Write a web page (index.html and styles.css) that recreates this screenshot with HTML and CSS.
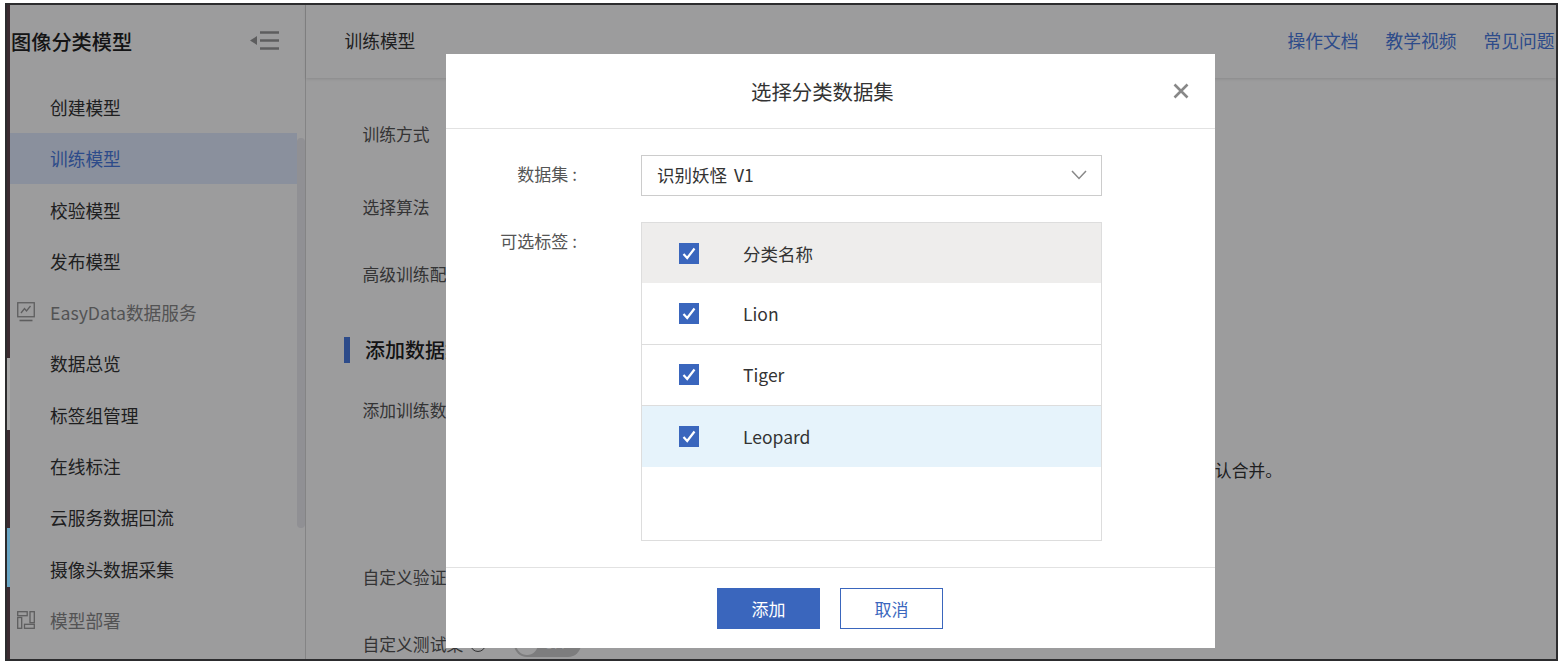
FILE: index.html
```html
<!DOCTYPE html>
<html lang="zh-CN">

<head>
    <meta charset="UTF-8">
    <title>训练模型</title>
    <link rel="stylesheet" href="styles.css">
</head>

<body>
    <div class="frame">
        <div class="strip">
            <span class="strip-dark strip-a"></span>
            <span class="strip-light"></span>
            <span class="strip-dark strip-b"></span>
            <span class="strip-blue"></span>
            <span class="strip-dark strip-c"></span>
        </div>

        <div class="app">
            <aside class="sidebar">
                <div class="side-head">
                    <h1>图像分类模型</h1>
                    <svg class="collapse-icon" width="30" height="20" viewBox="0 0 30 20">
                        <path d="M0 9.5 L7 5 V14 Z" fill="#999" />
                        <path d="M10 1.5 H29 M10 9.5 H29 M10 17.5 H29" stroke="#999" stroke-width="2.4" />
                    </svg>
                </div>
                <div class="side-body">
                    <ul class="side-list">
                        <li>创建模型</li>
                        <li class="active">训练模型</li>
                        <li>校验模型</li>
                        <li>发布模型</li>
                        <li class="group">
                            <svg width="18" height="20" viewBox="0 0 18 20" fill="none" stroke="#999">
                                <rect x="0.75" y="0.75" width="16.5" height="14" stroke-width="1.3" />
                                <path d="M4 11 L7.5 6.5 L9.5 9 L13.5 4" stroke-width="1.3" />
                                <path d="M2.5 18.5 H15.5" stroke-width="1.6" />
                            </svg>
                            EasyData数据服务
                        </li>
                        <li>数据总览</li>
                        <li>标签组管理</li>
                        <li>在线标注</li>
                        <li>云服务数据回流</li>
                        <li>摄像头数据采集</li>
                        <li class="group">
                            <svg width="18" height="18" viewBox="0 0 18 18" fill="none" stroke="#999" stroke-width="1.3">
                                <rect x="0.7" y="0.7" width="9.5" height="4" />
                                <rect x="13" y="0.7" width="4.3" height="11" />
                                <rect x="0.7" y="6.5" width="4" height="10.8" />
                                <rect x="7.5" y="13.3" width="9.8" height="4" />
                            </svg>
                            模型部署
                        </li>
                    </ul>
                    <div class="side-track"><span class="side-thumb"></span></div>
                </div>
            </aside>

            <main class="main">
                <div class="topbar">
                    <span class="topbar-title">训练模型</span>
                    <nav class="topbar-links">
                        <a href="#">操作文档</a>
                        <a href="#">教学视频</a>
                        <a href="#">常见问题</a>
                    </nav>
                </div>
                <div class="form">
                    <div class="form-label">训练方式</div>
                    <div class="form-label">选择算法</div>
                    <div class="form-label">高级训练配置</div>
                    <div class="form-section">添加数据集</div>
                    <div class="form-label">添加训练数据</div>
                    <div class="form-note">相同标签的数据将默认合并。</div>
                    <div class="form-label">自定义验证集</div>
                    <div class="form-label form-switch">
                        自定义测试集
                        <span class="info-icon">?</span>
                        <span class="toggle"><i></i>OFF</span>
                    </div>
                </div>
            </main>

            <div class="overlay">
                <div class="modal">
                    <div class="modal-head">
                        <h2>选择分类数据集</h2>
                        <svg width="16" height="16" viewBox="0 0 16 16" stroke="#888" stroke-width="2.6">
                            <path d="M1.5 1.5 L14.5 14.5 M14.5 1.5 L1.5 14.5" />
                        </svg>
                    </div>

                    <div class="modal-body">
                        <label class="field-label">数据集<span class="colon">:</span></label>
                        <div class="select">
                            <span class="select-value">识别妖怪 V1</span>
                            <svg width="16" height="10" viewBox="0 0 16 10" fill="none" stroke="#888" stroke-width="1.5">
                                <path d="M1 1 L8 8.5 L15 1" />
                            </svg>
                        </div>

                        <label class="field-label">可选标签<span class="colon">:</span></label>
                        <div class="tag-table">
                            <div class="tag-row tag-head">
                                <span class="check"><svg width="20" height="21" viewBox="0 0 20 21"><path d="M4.5 11 L8.2 15 L15.5 5.5" /></svg></span>
                                分类名称
                            </div>
                            <div class="tag-row tag-first">
                                <span class="check"><svg width="20" height="21" viewBox="0 0 20 21"><path d="M4.5 11 L8.2 15 L15.5 5.5" /></svg></span>
                                Lion
                            </div>
                            <div class="tag-row">
                                <span class="check"><svg width="20" height="21" viewBox="0 0 20 21"><path d="M4.5 11 L8.2 15 L15.5 5.5" /></svg></span>
                                Tiger
                            </div>
                            <div class="tag-row tag-hover">
                                <span class="check"><svg width="20" height="21" viewBox="0 0 20 21"><path d="M4.5 11 L8.2 15 L15.5 5.5" /></svg></span>
                                Leopard
                            </div>
                        </div>
                    </div>

                    <div class="modal-foot">
                        <button class="btn btn-primary">添加</button>
                        <button class="btn btn-plain">取消</button>
                    </div>
                </div>
            </div>
        </div>
    </div>
</body>

</html>
```

FILE: styles.css
```css
* {
    box-sizing: border-box;
}

html,
body {
    margin: 0;
    padding: 0;
    height: 100%;
    background-color: white;
    overflow: hidden;
}

body {
    font-family: "Noto Sans CJK SC", "Noto Sans", sans-serif;
    color: #333;
}

.frame {
    display: flex;
    width: 1553px;
    height: 658px;
    margin: 3px 0 0 5px;
    border: 2px solid #2c2c2e;
}

/* bit of the desktop that shows at the left edge */
.strip {
    width: 3px;
    flex-shrink: 0;
    display: flex;
    flex-direction: column;
}

.strip-dark {
    background-color: #3b2b31;
}

.strip-a {
    height: 353px;
}

.strip-light {
    height: 72px;
    background-color: #a9a9a9;
}

.strip-b {
    height: 98px;
}

.strip-blue {
    height: 59px;
    background-color: #6aa5c4;
}

.strip-c {
    flex: 1;
}

.app {
    position: relative;
    flex: 1;
    display: flex;
    overflow: hidden;
}

.sidebar {
    width: 296px;
    flex-shrink: 0;
    display: flex;
    flex-direction: column;
    border-right: 1px solid #d8d8d8;
}

.side-head {
    height: 76.3px;
    flex-shrink: 0;
    display: flex;
    align-items: center;
    justify-content: space-between;
    padding: 0 25px 4px 1px;
}

.side-head h1 {
    margin: 0;
    font-size: 20.2px;
    font-weight: 500;
    color: #222;
}

.side-body {
    flex: 1;
    display: flex;
    min-height: 0;
}

.side-list {
    flex: 1;
    list-style-type: none;
    margin: 0;
    padding: 0;
}

.side-list li {
    height: 51.3px;
    display: flex;
    align-items: center;
    padding-left: 40px;
    font-size: 17.7px;
    color: #333;
    white-space: nowrap;
}

.side-list li.active {
    background-color: #e2ebff;
    color: #4a7be0;
}

.side-list li.group {
    padding-left: 7px;
    color: #888;
}

.side-list li.group svg {
    margin-right: 15px;
    flex-shrink: 0;
}

.side-track {
    width: 8px;
    flex-shrink: 0;
    padding-top: 57px;
}

.side-thumb {
    display: block;
    height: 390px;
    border-radius: 4px;
    background-color: #ebebf0;
}

.main {
    flex: 1;
    min-width: 0;
}

.topbar {
    height: 73px;
    display: flex;
    align-items: center;
    justify-content: space-between;
    padding: 0 1.5px 3px 38.5px;
    box-shadow: 0 1px 3px rgba(0, 0, 0, 0.12);
}

.topbar-title {
    font-size: 17.7px;
}

.topbar-links {
    display: flex;
    gap: 27px;
}

.topbar-links a {
    font-size: 17.75px;
    color: #4a7be0;
    text-decoration: none;
}

.form {
    display: grid;
    grid-template-rows: 73px 67px 75px 61px 60px 107px 67px;
    padding: 44px 0 0 56.5px;
    font-size: 16.8px;
    color: #555;
}

.form-label,
.form-note {
    line-height: 24px;
    white-space: nowrap;
}

.form-section {
    margin-left: -18.5px;
    padding-left: 15px;
    border-left: 6px solid #4a7be0;
    height: 26px;
    line-height: 26px;
    font-size: 20px;
    font-weight: 500;
    color: #222;
}

.form-note {
    padding-right: 274px;
    text-align: right;
    color: #333;
}

.form-switch {
    display: flex;
    align-items: center;
    height: 24px;
}

.info-icon {
    width: 16px;
    height: 16px;
    margin-left: 7px;
    border: 1.5px solid #555;
    border-radius: 50%;
    font-size: 10px;
    line-height: 13px;
    text-align: center;
}

.toggle {
    display: flex;
    align-items: center;
    flex-shrink: 0;
    width: 67px;
    height: 26px;
    margin-left: 28px;
    padding: 2px;
    border-radius: 13px;
    background-color: #ccc;
    font-size: 13px;
    color: #fff;
}

.toggle i {
    width: 22px;
    height: 22px;
    margin-right: 6px;
    border-radius: 50%;
    background-color: #fff;
}

.overlay {
    position: absolute;
    top: 0;
    left: 0;
    right: 0;
    bottom: 0;
    padding: 49px 0 0 436px;
    background-color: rgba(0, 0, 3, 0.388);
}

.modal {
    width: 769px;
    height: 594px;
    display: flex;
    flex-direction: column;
    background-color: white;
}

.modal-head {
    height: 75px;
    flex-shrink: 0;
    display: flex;
    align-items: center;
    justify-content: space-between;
    padding: 0 26px 0 305px;
    border-bottom: 1px solid #e2e2e2;
}

.modal-head h2 {
    margin: 0;
    font-size: 20.4px;
    font-weight: 400;
    color: #333;
}

.modal-body {
    flex: 1;
    display: grid;
    grid-template-columns: 134px 461px;
    grid-template-rows: 41px auto;
    column-gap: 61px;
    row-gap: 26px;
    padding-top: 26px;
}

.field-label {
    padding: 7px 3px 0 0;
    font-size: 17px;
    color: #555;
    text-align: right;
    line-height: 24px;
}

.colon {
    padding-left: 4px;
}

.select {
    display: flex;
    align-items: center;
    justify-content: space-between;
    padding: 0 14px 2px 15px;
    border: 1px solid #ccc;
    color: #333;
}

.select-value {
    font-size: 17.5px;
    word-spacing: 3px;
}

.tag-table {
    height: 319px;
    border: 1px solid #ddd;
}

.tag-row {
    height: 61px;
    display: flex;
    align-items: center;
    padding: 0 0 1px 37px;
    border-bottom: 1px solid #ddd;
    font-size: 17.5px;
    color: #333;
}

.tag-head {
    height: 60px;
    padding-bottom: 0;
    background-color: #eeedec;
    border-bottom: none;
}

.tag-first {
    height: 62px;
    padding-bottom: 1px;
}

.tag-hover {
    padding-bottom: 0;
    background-color: #e6f3fb;
    border-bottom: none;
}

.check {
    width: 20px;
    height: 21px;
    margin-right: 44px;
    background-color: #3a66bd;
}

.check svg {
    display: block;
    fill: none;
    stroke: white;
    stroke-width: 2.2;
}

.modal-foot {
    height: 81px;
    flex-shrink: 0;
    display: flex;
    gap: 20px;
    padding: 20px 0 0 271px;
    border-top: 1px solid #e2e2e2;
}

.btn {
    width: 103px;
    height: 41px;
    padding: 0;
    font-family: inherit;
    font-size: 17px;
    border: 1px solid #3a66bd;
    cursor: pointer;
}

.btn-primary {
    background-color: #3a66bd;
    color: white;
}

.btn-plain {
    background-color: white;
    color: #3a66bd;
}
```
